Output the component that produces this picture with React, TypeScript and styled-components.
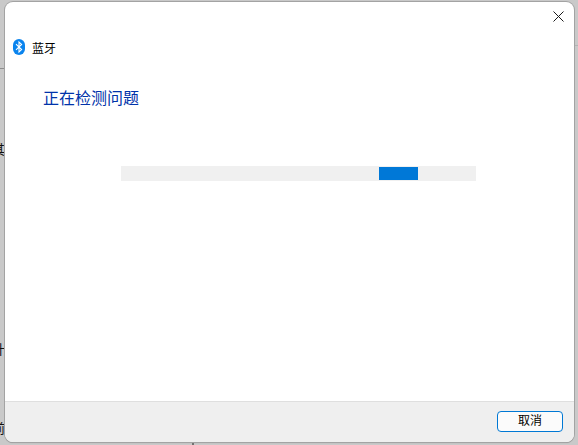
import * as React from 'react'
import styled, { createGlobalStyle } from 'styled-components'

const GlobalStyle = createGlobalStyle`
  html, body {
    margin: 0;
    padding: 0;
    width: 578px;
    height: 445px;
    overflow: hidden;
    background: #c9c9c9;
  }
`

const Desktop = styled.div`
  position: relative;
  width: 578px;
  height: 445px;
  box-sizing: border-box;
  padding: 2px 4px 3px 5px;
  font-family: "Liberation Sans", "Noto Sans CJK SC", sans-serif;
  overflow: hidden;
`

const BehindText = styled.span<{ $top: number }>`
  position: absolute;
  left: -8px;
  top: ${p => p.$top}px;
  font-size: 13px;
  line-height: 16px;
  color: #111;
`

const BehindLine = styled.div<{ $top: number; $right?: boolean }>`
  position: absolute;
  top: ${p => p.$top}px;
  ${p => (p.$right ? 'right: 0;' : 'left: 0;')}
  width: 5px;
  height: 1px;
  background: ${p => (p.$right ? '#b4b4b4' : '#8e8e8e')};
`

const BehindTick = styled.div`
  position: absolute;
  left: 192px;
  bottom: 0;
  width: 2px;
  height: 3px;
  background: #707070;
`

const Dialog = styled.div`
  position: relative;
  height: 100%;
  display: flex;
  flex-direction: column;
  background: #fff;
  border-radius: 8px;
  box-shadow: 0 0 0 1px #a3a3a3, 0 1px 1px #8c8c8c;
  overflow: hidden;
`

const CloseRow = styled.div`
  height: 30px;
  display: flex;
  justify-content: flex-end;
  align-items: flex-start;
  padding: 8px 10px 0 0;
  box-sizing: border-box;
`

const CloseButton = styled.button`
  width: 11px;
  height: 11px;
  padding: 0;
  border: 0;
  background: none;
  display: block;
`

const Header = styled.div`
  display: flex;
  align-items: center;
  gap: 7px;
  height: 30px;
  padding-left: 8px;
`

const AppName = styled.span`
  font-size: 12px;
  color: #000;
`

const Content = styled.div`
  flex: 1;
  padding: 26px 0 0 38px;
`

const Title = styled.h1`
  margin: 0;
  font-size: 16px;
  line-height: 22px;
  font-weight: 400;
  color: #0033aa;
`

const Track = styled.div`
  width: 355px;
  height: 15px;
  padding: 1px 0;
  box-sizing: border-box;
  margin: 56px 0 0 78px;
  display: flex;
  background: #f0f0f0;
`

const Chunk = styled.div<{ $offset: number; $size: number }>`
  margin-left: ${p => p.$offset}px;
  width: ${p => p.$size}px;
  background: #0078d7;
`

const Footer = styled.div`
  height: 41px;
  box-sizing: border-box;
  display: flex;
  justify-content: flex-end;
  padding: 9px 11px 0 0;
  background: #efefef;
  border-top: 1px solid #dfdfdf;
`

const CancelButton = styled.button`
  width: 66px;
  height: 21px;
  padding: 0;
  box-sizing: border-box;
  border: 1.5px solid #0078d4;
  border-radius: 4px;
  background: #fbfbfb;
  font-family: inherit;
  font-size: 12px;
  line-height: 17px;
  color: #000;
`

const BluetoothIcon = () => (
  <svg width="12" height="16" viewBox="0 0 12 16">
    <rect x="0" y="0" width="12" height="16" rx="6" fill="#0a84ee" />
    <path d="M3 5.2 8.6 10.6 6 13V3L8.6 5.4 3 10.8" fill="none" stroke="#fff" strokeWidth="1.1" />
  </svg>
)

const CloseIcon = () => (
  <svg width="11" height="11" viewBox="0 0 11 11">
    <path d="M.5.5 10.5 10.5M10.5.5.5 10.5" stroke="#1a1a1a" strokeWidth="1" />
  </svg>
)

export default function App() {
  return (
    <Desktop>
      <GlobalStyle />
      <BehindText $top={142}>其</BehindText>
      <BehindText $top={342}>计</BehindText>
      <BehindText $top={421}>前</BehindText>
      <BehindLine $top={68} />
      <BehindLine $top={45} $right />
      <BehindTick />
      <Dialog>
        <CloseRow>
          <CloseButton>
            <CloseIcon />
          </CloseButton>
        </CloseRow>
        <Header>
          <BluetoothIcon />
          <AppName>蓝牙</AppName>
        </Header>
        <Content>
          <Title>正在检测问题</Title>
          <Track>
            <Chunk $offset={258} $size={39} />
          </Track>
        </Content>
        <Footer>
          <CancelButton>取消</CancelButton>
        </Footer>
      </Dialog>
    </Desktop>
  )
}
